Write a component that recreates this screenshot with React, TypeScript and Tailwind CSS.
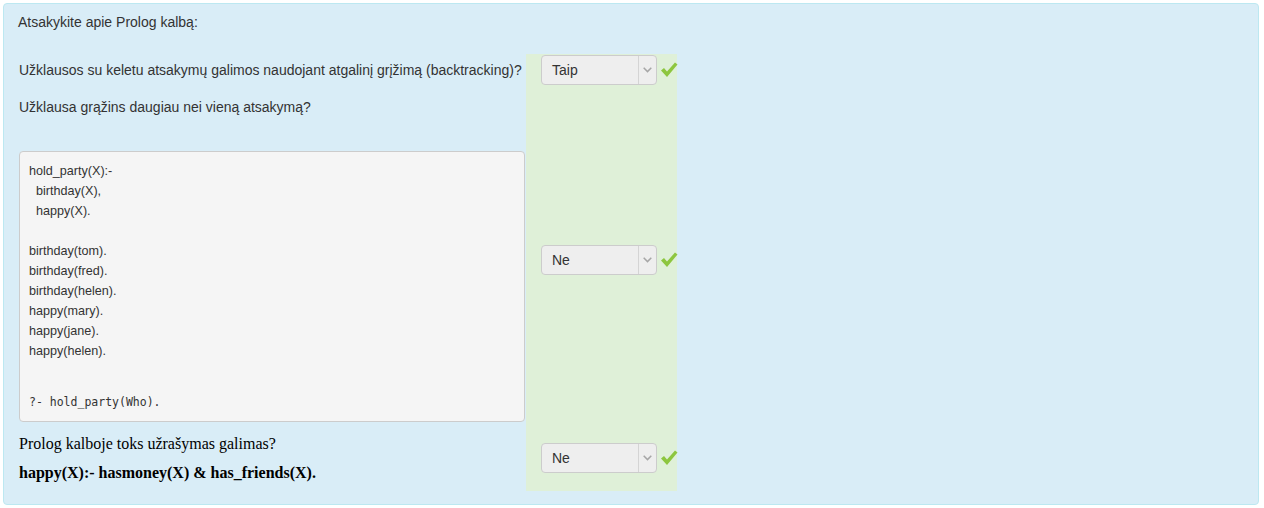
function Check() {
  return (
    <svg width="18" height="18" viewBox="0 0 18 18" className="shrink-0">
      <path d="M1 9.5 L4 7 L7 10.5 L15 1.5 L17.5 3.5 L7 16 Z" fill="#8dc63f" />
    </svg>
  );
}

function Answer({ value }: { value: string }) {
  return (
    <div className="flex items-center">
      <div className="flex h-[30px] w-[116px] items-stretch rounded-[4px] border border-[#cccccc] bg-[#eeeeee]">
        <div className="flex flex-1 items-center pl-[10px] text-[14px] text-[#333333]">{value}</div>
        <div className="flex w-[18px] items-center justify-center border-l border-[#d4d4d4]">
          <svg width="9" height="6" viewBox="0 0 9 6">
            <path d="M0.7 0.8 L4.5 4.6 L8.3 0.8" fill="none" stroke="#a6a6a6" strokeWidth="1.5" />
          </svg>
        </div>
      </div>
      <div className="ml-[3px]">
        <Check />
      </div>
    </div>
  );
}

const codeLines = [
  'hold_party(X):-',
  '\u00a0\u00a0birthday(X),',
  '\u00a0\u00a0happy(X).',
  '\u00a0',
  'birthday(tom).',
  'birthday(fred).',
  'birthday(helen).',
  'happy(mary).',
  'happy(jane).',
  'happy(helen).',
];

export default function App() {
  return (
    <div className="font-['Liberation_Sans',Arial,sans-serif] text-[#333333]">
      <div className="ml-[3px] mt-[3px] w-[1256px] rounded-[4px] border border-[#bce8f1] bg-[#d9edf7] pb-[13px] pl-[15px] pt-[8px]">
        <div className="-ml-px text-[14px] leading-[20px]">Atsakykite apie Prolog kalbą:</div>

        <div className="mt-[22px] grid grid-cols-[507px_151px]">
          {/* klausimas 1 */}
          <div className="flex h-[32px] items-center text-[14px] leading-[20px]">
            Užklausos su keletu atsakymų galimos naudojant atgalinį grįžimą (backtracking)?
          </div>
          <div className="flex items-center bg-[#dff0d8] pl-[15px]">
            <Answer value="Taip" />
          </div>

          {/* klausimas 2 */}
          <div className="pb-[12px] pr-[1px] pt-[11px]">
            <div className="text-[14px] leading-[20px]">Užklausa grąžins daugiau nei vieną atsakymą?</div>
            <div className="mt-[34px] h-[271px] rounded-[4px] border border-[#cccccc] bg-[#f5f5f5] px-[9px] pt-[9px]">
              {codeLines.map((l, i) => (
                <div key={i} className="text-[12.6px] leading-[20px]">
                  {l}
                </div>
              ))}
              <div className="mt-[31px] font-['DejaVu_Sans_Mono',monospace] text-[11.5px] leading-[20px]">
                ?- hold_party(Who).
              </div>
            </div>
          </div>
          <div className="flex items-center bg-[#dff0d8] pl-[15px]">
            <Answer value="Ne" />
          </div>

          {/* klausimas 3 */}
          <div className="pb-[8px] font-['Liberation_Serif','Times_New_Roman',serif] text-[16px] leading-[20px] text-black">
            <div>Prolog kalboje toks užrašymas galimas?</div>
            <div className="mt-[9px] font-bold">happy(X):- hasmoney(X) &amp; has_friends(X).</div>
          </div>
          <div className="flex items-start bg-[#dff0d8] pl-[15px] pt-[9px]">
            <Answer value="Ne" />
          </div>
        </div>
      </div>
    </div>
  );
}
